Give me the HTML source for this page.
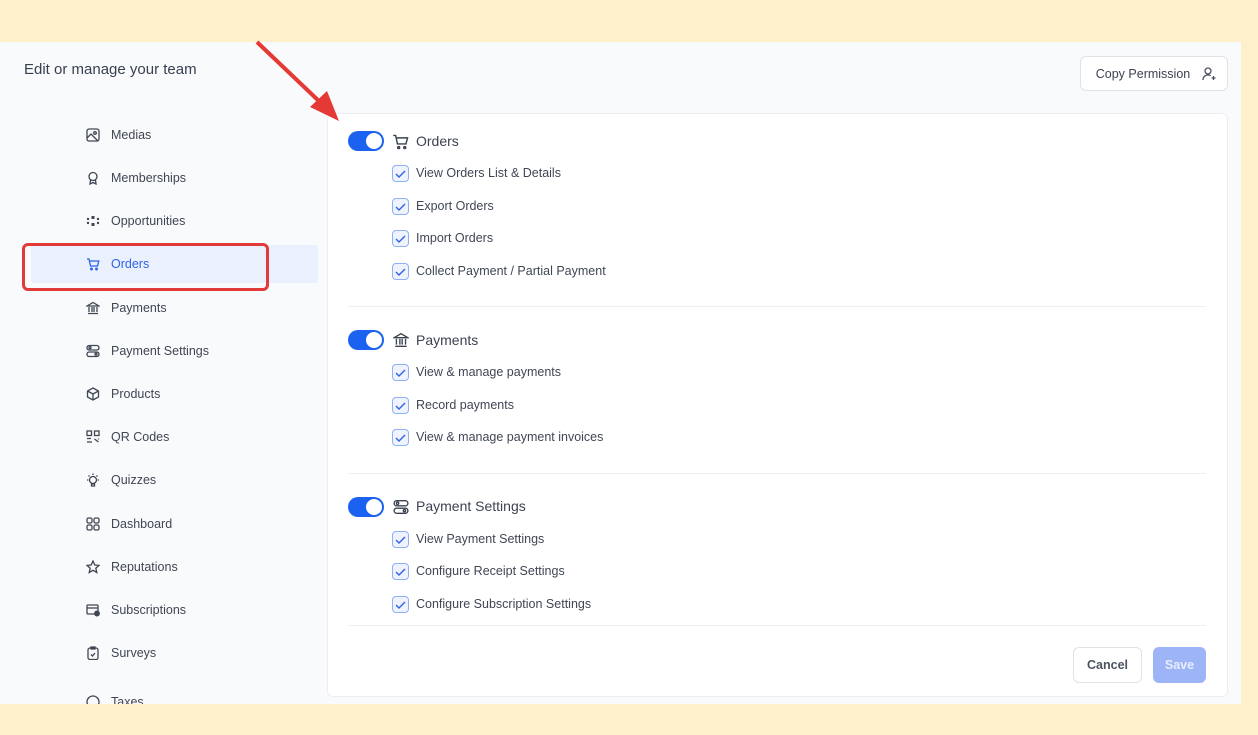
<!DOCTYPE html>
<html><head><meta charset="utf-8"><style>
*{margin:0;padding:0;box-sizing:border-box}
body{width:1258px;height:735px;background:#fff0cc;position:relative;overflow:hidden;font-family:"Liberation Sans",Arial,sans-serif;color:#374151}
.panel{position:absolute;left:0;top:42px;width:1241px;height:662px;background:#f9fafb;overflow:hidden}
.a{position:absolute}
.title{left:24px;top:19px;font-size:15px;color:#374151}
.nav{left:86px;font-size:12.5px;color:#3f4654;height:16px;line-height:16px}
.nav svg{position:absolute;left:0;top:1px}
.nav span{position:absolute;left:25px;white-space:nowrap}
.hl{left:31px;top:203px;width:287px;height:38px;background:#eaf0fd;border-radius:3px}
.red{left:22px;top:201px;width:247px;height:48px;border:3px solid #e23a3a;border-radius:6px}
.card{left:327px;top:71px;width:901px;height:584px;background:#fff;border:1px solid #eceef2;border-radius:6px}
.tog{width:36px;height:20px;border-radius:10px;background:#1c62f0}
.tog::after{content:"";position:absolute;right:2px;top:2px;width:16px;height:16px;border-radius:50%;background:#fff}
.sec{font-size:14px;color:#3b4250}
.cb{width:17px;height:17px;border:1.5px solid #8fb0f5;border-radius:4px;background:#eef3fe}
.it{font-size:12.5px;color:#3f4654;white-space:nowrap}
.div{height:1px;background:#eef0f3;left:348px;width:858px}
.btn{border:1px solid #dfe2e7;border-radius:6px;background:#fff;font-size:12.5px;font-weight:bold;color:#4b5260;text-align:center}
</style></head><body>
<div class="panel">
<div class="a title">Edit or manage your team</div>
<div class="a hl"></div>
<div class="a btn" style="left:1080px;top:14px;width:148px;height:35px;line-height:34px;font-weight:normal;color:#3b4250;padding-right:22px">Copy Permission
<svg class="a" style="left:120px;top:9px" width="16" height="16" viewBox="0 0 16 16" fill="none" stroke="#4b5260" stroke-width="1.3"><circle cx="7" cy="5" r="3"/><path d="M2 14c0-3 2-5 5-5 1 0 2 .3 2.6.8"/><path d="M12.5 10v4M10.5 12h4"/></svg></div>

<div class="a nav" style="top:85px"><svg width="14" height="14" viewBox="0 0 14 14" fill="none" stroke="#3f4654" stroke-width="1.3"><rect x="1" y="1" width="12" height="12" rx="2"/><path d="M1 10l4-4 7 7"/><circle cx="9" cy="5" r="1.3"/></svg><span>Medias</span></div>
<div class="a nav" style="top:128px"><svg width="14" height="14" viewBox="0 0 14 14" fill="none" stroke="#3f4654" stroke-width="1.3"><circle cx="7" cy="5.5" r="4"/><path d="M4.5 9l-.5 4 3-1.5 3 1.5-.5-4"/></svg><span>Memberships</span></div>
<div class="a nav" style="top:171px"><svg width="14" height="14" viewBox="0 0 14 14" fill="#3f4654"><circle cx="2" cy="5" r="1.2"/><circle cx="2" cy="9" r="1.2"/><circle cx="12" cy="5" r="1.2"/><circle cx="12" cy="9" r="1.2"/><rect x="5.5" y="2" width="3" height="3"/><rect x="5.5" y="9" width="3" height="3"/></svg><span>Opportunities</span></div>
<div class="a nav" style="top:214px;color:#2f62e6"><svg width="14" height="14" viewBox="0 0 14 14" fill="none" stroke="#2f62e6" stroke-width="1.3"><path d="M1 2h2l1.5 7h7l1.3-5H4"/><circle cx="5.5" cy="12" r=".8"/><circle cx="10.5" cy="12" r=".8"/></svg><span>Orders</span></div>
<div class="a nav" style="top:258px"><svg width="14" height="14" viewBox="0 0 14 14" fill="none" stroke="#3f4654" stroke-width="1.3"><path d="M1 5l6-3.5L13 5zM2 12.5h10M3 6v5M6 6v5M8 6v5M11 6v5"/></svg><span>Payments</span></div>
<div class="a nav" style="top:301px"><svg width="14" height="14" viewBox="0 0 14 14" fill="none" stroke="#3f4654" stroke-width="1.3"><rect x="1" y="1.5" width="12" height="4.5" rx="2.2"/><rect x="1" y="8" width="12" height="4.5" rx="2.2"/><circle cx="4" cy="3.7" r="1"/><circle cx="10" cy="10.2" r="1"/></svg><span>Payment Settings</span></div>
<div class="a nav" style="top:344px"><svg width="14" height="14" viewBox="0 0 14 14" fill="none" stroke="#3f4654" stroke-width="1.3"><path d="M7 1l5.5 3v6L7 13 1.5 10V4z M1.5 4L7 7l5.5-3M7 7v6"/></svg><span>Products</span></div>
<div class="a nav" style="top:387px"><svg width="14" height="14" viewBox="0 0 14 14" fill="none" stroke="#3f4654" stroke-width="1.3"><rect x="1" y="1" width="4.5" height="4.5"/><rect x="8.5" y="1" width="4.5" height="4.5"/><path d="M1 8.5h4M1 12h5M8.5 9l4 3M12.5 8.5v1"/></svg><span>QR Codes</span></div>
<div class="a nav" style="top:430px"><svg width="14" height="14" viewBox="0 0 14 14" fill="none" stroke="#3f4654" stroke-width="1.3"><circle cx="7" cy="7" r="3.5"/><path d="M5.5 11h3v2h-3zM7 0.5v1.5M1 7h1.3M11.7 7H13M2.5 2.5l1 1M11.5 2.5l-1 1"/></svg><span>Quizzes</span></div>
<div class="a nav" style="top:474px"><svg width="14" height="14" viewBox="0 0 14 14" fill="none" stroke="#3f4654" stroke-width="1.3"><rect x="1" y="1" width="5" height="5" rx="1.5"/><rect x="8" y="1" width="5" height="5" rx="1.5"/><rect x="1" y="8" width="5" height="5" rx="1.5"/><rect x="8" y="8" width="5" height="5" rx="1.5"/></svg><span>Dashboard</span></div>
<div class="a nav" style="top:517px"><svg width="14" height="14" viewBox="0 0 14 14" fill="none" stroke="#3f4654" stroke-width="1.3"><path d="M7 1l1.8 4 4.2.4-3.2 2.8 1 4.3L7 10.3 3.2 12.5l1-4.3L1 5.4l4.2-.4z"/></svg><span>Reputations</span></div>
<div class="a nav" style="top:560px"><svg width="14" height="14" viewBox="0 0 14 14" fill="none" stroke="#3f4654" stroke-width="1.3"><rect x="1" y="2" width="11" height="9" rx="1"/><path d="M1 5h11"/><circle cx="11" cy="10.5" r="2.3" fill="#3f4654"/></svg><span>Subscriptions</span></div>
<div class="a nav" style="top:603px"><svg width="14" height="14" viewBox="0 0 14 14" fill="none" stroke="#3f4654" stroke-width="1.3"><rect x="2" y="2" width="10" height="11.5" rx="2"/><path d="M5 1h4v2H5zM5 8.5l1.5 1.5 2.5-3"/></svg><span>Surveys</span></div>
<div class="a nav" style="top:652px"><svg width="14" height="14" viewBox="0 0 14 14" fill="none" stroke="#3f4654" stroke-width="1.3"><circle cx="7" cy="7" r="6"/></svg><span>Taxes</span></div>
<div class="a red"></div>

<div class="a card"></div>
<div class="a tog" style="left:348px;top:89px"></div>
<svg class="a" style="left:392px;top:91px" width="17" height="17" viewBox="0 0 14 14" fill="none" stroke="#3b4250" stroke-width="1.2"><path d="M1 2h2l1.5 7h7l1.3-5H4"/><circle cx="5.5" cy="12" r=".8"/><circle cx="10.5" cy="12" r=".8"/></svg>
<div class="a sec" style="left:416px;top:91px">Orders</div>
<div class="a cb" style="left:392px;top:123px"></div><div class="a it" style="left:416px;top:124px">View Orders List &amp; Details</div>
<div class="a cb" style="left:392px;top:156px"></div><div class="a it" style="left:416px;top:157px">Export Orders</div>
<div class="a cb" style="left:392px;top:188px"></div><div class="a it" style="left:416px;top:189px">Import Orders</div>
<div class="a cb" style="left:392px;top:221px"></div><div class="a it" style="left:416px;top:222px">Collect Payment / Partial Payment</div>
<div class="a div" style="top:264px"></div>
<div class="a tog" style="left:348px;top:288px"></div>
<svg class="a" style="left:393px;top:290px" width="16" height="16" viewBox="0 0 14 14" fill="none" stroke="#3b4250" stroke-width="1.2"><path d="M1 5l6-3.5L13 5zM2 12.5h10M3 6v5M6 6v5M8 6v5M11 6v5"/></svg>
<div class="a sec" style="left:416px;top:290px">Payments</div>
<div class="a cb" style="left:392px;top:322px"></div><div class="a it" style="left:416px;top:323px">View &amp; manage payments</div>
<div class="a cb" style="left:392px;top:355px"></div><div class="a it" style="left:416px;top:356px">Record payments</div>
<div class="a cb" style="left:392px;top:387px"></div><div class="a it" style="left:416px;top:388px">View &amp; manage payment invoices</div>
<div class="a div" style="top:431px"></div>
<div class="a tog" style="left:348px;top:455px"></div>
<svg class="a" style="left:393px;top:457px" width="16" height="16" viewBox="0 0 14 14" fill="none" stroke="#3b4250" stroke-width="1.2"><rect x="1" y="1.5" width="12" height="4.5" rx="2.2"/><rect x="1" y="8" width="12" height="4.5" rx="2.2"/><circle cx="4" cy="3.7" r="1"/><circle cx="10" cy="10.2" r="1"/></svg>
<div class="a sec" style="left:416px;top:456px">Payment Settings</div>
<div class="a cb" style="left:392px;top:489px"></div><div class="a it" style="left:416px;top:490px">View Payment Settings</div>
<div class="a cb" style="left:392px;top:521px"></div><div class="a it" style="left:416px;top:522px">Configure Receipt Settings</div>
<div class="a cb" style="left:392px;top:554px"></div><div class="a it" style="left:416px;top:555px">Configure Subscription Settings</div>
<div class="a div" style="top:583px"></div>
<div class="a btn" style="left:1073px;top:605px;width:69px;height:36px;line-height:35px">Cancel</div>
<div class="a btn" style="left:1153px;top:605px;width:53px;height:36px;line-height:35px;background:#9db4f7;border-color:#9db4f7;color:#e9eefc">Save</div>
</div>
<svg class="a" style="left:0;top:0" width="1258" height="735">
<g fill="none" stroke="#2f62e6" stroke-width="1.4">
<path d="M396 174l3 3 6-6"/><path d="M396 207l3 3 6-6"/><path d="M396 239l3 3 6-6"/><path d="M396 272l3 3 6-6"/>
<path d="M396 373l3 3 6-6"/><path d="M396 406l3 3 6-6"/><path d="M396 438l3 3 6-6"/>
<path d="M396 540l3 3 6-6"/><path d="M396 572l3 3 6-6"/><path d="M396 605l3 3 6-6"/>
</g>
<line x1="257" y1="42" x2="322" y2="104" stroke="#e53935" stroke-width="4"/>
<path d="M339 121L310 107L327 91Z" fill="#e53935"/>
</svg>
</body></html>
